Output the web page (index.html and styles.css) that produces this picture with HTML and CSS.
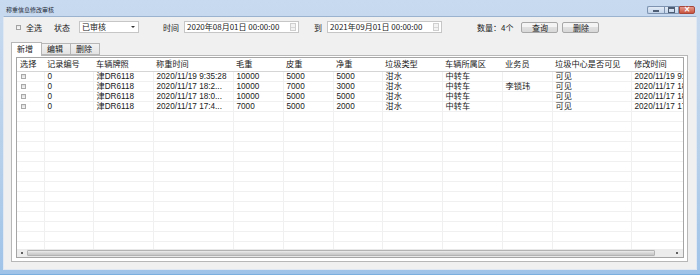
FILE: index.html
```html
<!DOCTYPE html>
<html lang="zh-CN">
<head>
    <meta charset="UTF-8">
    <title>称重信息修改审核</title>
    <link rel="stylesheet" href="styles.css">
</head>
<body>
    <div class="window">
        <!-- Title bar -->
        <div class="titlebar">
            <span class="title">称重信息修改审核</span>
            <div class="caption-btns">
                <span class="cap-btn cap-min"><i></i></span>
                <span class="cap-btn cap-max"><i></i></span>
                <span class="cap-btn cap-close">&#215;</span>
            </div>
        </div>

        <div class="client">
            <!-- Search bar -->
            <div class="toolbar">
                <span class="check"></span>
                <span class="lbl lbl-all">全选</span>
                <span class="lbl lbl-state">状态</span>
                <span class="combo">已审核<i class="arrow"></i></span>
                <span class="lbl lbl-time">时间</span>
                <span class="datebox">2020年08月01日 00:00:00<span class="spin"><i class="up"></i><i class="down"></i></span></span>
                <span class="lbl lbl-to">到</span>
                <span class="datebox">2021年09月01日 00:00:00<span class="spin"><i class="up"></i><i class="down"></i></span></span>
                <span class="lbl lbl-count">数量：4个</span>
                <span class="btn">查询</span>
                <span class="btn">删除</span>
            </div>

            <!-- Tabs -->
            <div class="tabs">
                <span class="tab active">新增</span>
                <span class="tab">编辑</span>
                <span class="tab">删除</span>
            </div>

            <div class="panel">
                <div class="grid">
                    <div class="grid-view">
                        <table class="list">
                            <colgroup>
                                <col style="width:27px"><col style="width:49px"><col style="width:60px">
                                <col style="width:80px"><col style="width:50px"><col style="width:50px">
                                <col style="width:49px"><col style="width:60px"><col style="width:60px">
                                <col style="width:50px"><col style="width:79px"><col style="width:80px">
                            </colgroup>
                            <thead>
                                <tr>
                                    <th>选择</th><th>记录编号</th><th>车辆牌照</th><th>称重时间</th>
                                    <th>毛重</th><th>皮重</th><th>净重</th><th>垃圾类型</th>
                                    <th>车辆所属区</th><th>业务员</th><th>垃圾中心是否可见</th><th>修改时间</th>
                                </tr>
                            </thead>
                            <tbody id="rows"></tbody>
                        </table>
                    </div>
                    <div class="hscroll">
                        <span class="sb-arrow sb-left"><i></i></span>
                        <span class="sb-thumb"></span>
                        <span class="sb-arrow sb-right"><i></i></span>
                    </div>
                </div>
            </div>
        </div>
    </div>

    <script>
        // List rows
        var data = [
            ["0", "津DR6118", "2020/11/19 9:35:28", "10000", "5000", "5000", "泔水", "中转车", "", "可见", "2020/11/19 9:44:10"],
            ["0", "津DR6118", "2020/11/17 18:2...", "10000", "7000", "3000", "泔水", "中转车", "李锁玮", "可见", "2020/11/17 18:25:01"],
            ["0", "津DR6118", "2020/11/17 18:0...", "10000", "5000", "5000", "泔水", "中转车", "", "可见", "2020/11/17 18:05:12"],
            ["0", "津DR6118", "2020/11/17 17:4...", "7000", "5000", "2000", "泔水", "中转车", "", "可见", "2020/11/17 17:45:30"]
        ];

        var tbody = document.getElementById("rows");
        for (var i = 0; i < 22; i++) {
            var tr = document.createElement("tr");
            var first = document.createElement("td");
            if (i < data.length) {
                first.innerHTML = '<span class="row-check"></span>';
            }
            tr.appendChild(first);
            for (var j = 0; j < 11; j++) {
                var td = document.createElement("td");
                td.innerText = i < data.length ? data[i][j] : "";
                tr.appendChild(td);
            }
            tbody.appendChild(tr);
        }
    </script>
</body>
</html>
```

FILE: styles.css
```css
/* Window frame */
body {
    margin: 0;
    padding: 0;
    background: #fff;
    font-family: "Noto Sans CJK SC", "Noto Sans", sans-serif;
    color: #1a1a1a;
}

.window {
    width: 700px;
    height: 275px;
    box-sizing: border-box;
    padding: 0 3px 4px 3px;
    display: flex;
    flex-direction: column;
    background: linear-gradient(#c8daef, #b5cfea 60%, #9fc3e8);
    border-bottom: 1px solid #7aaede;
}

.titlebar {
    height: 16px;
    display: flex;
    align-items: center;
    justify-content: space-between;
    flex-shrink: 0;
}

.title {
    font-size: 6px;
    margin-left: 3px;
    margin-top: 2px;
    color: #1f2a38;
}

.caption-btns {
    display: flex;
    align-self: flex-start;
    margin-top: 6px;
    margin-right: 2px;
}

.cap-btn {
    height: 8px;
    box-sizing: border-box;
    border: 1px solid #7d93b0;
    border-radius: 2px;
    background: linear-gradient(#e2ebf6, #c3d4ea);
    display: flex;
    align-items: center;
    justify-content: center;
}

.cap-min {
    width: 17px;
    border-right: none;
    border-radius: 2px 0 0 2px;
}

.cap-min i {
    width: 6px;
    height: 2px;
    margin-top: 2px;
    background: #4d5e75;
}

.cap-max {
    width: 15px;
    border-radius: 0;
}

.cap-max i {
    width: 5px;
    height: 3px;
    border: 1px solid #4d5e75;
    border-top-width: 2px;
}

.cap-close {
    width: 16px;
    border-color: #a6463b;
    border-radius: 0 2px 2px 0;
    background: linear-gradient(#e59a8c, #c9553f);
    color: #fff;
    font-size: 8px;
    line-height: 1;
    font-family: "DejaVu Sans", sans-serif;
    font-weight: bold;
}

.client {
    flex: 1;
    background: #f0f0f0;
    border: 1px solid #dfe8f3;
    border-top: 1px solid #9bb3cf;
    display: flex;
    flex-direction: column;
    min-height: 0;
}

/* Search bar */
.toolbar {
    display: flex;
    align-items: center;
    height: 12px;
    margin-top: 4px;
    font-size: 8px;
    white-space: nowrap;
}

.check {
    width: 5px;
    height: 5px;
    border: 1px solid #a3a3a3;
    background: linear-gradient(#e8e8e8, #fafafa);
    margin-left: 12px;
    box-sizing: border-box;
}

.lbl-all { margin-left: 5px; }
.lbl-state { margin-left: 12px; }
.lbl-time { margin-left: 24px; }
.lbl-to { margin-left: 15px; }
.lbl-count { margin-left: 35px; }

.combo {
    position: relative;
    width: 60px;
    height: 12px;
    box-sizing: border-box;
    margin-left: 9px;
    padding-left: 2px;
    background: #fff;
    border: 1px solid #c6c6c6;
    line-height: 10px;
}

.combo .arrow {
    position: absolute;
    right: 3px;
    top: 4px;
    border-left: 2px solid transparent;
    border-right: 2px solid transparent;
    border-top: 2px solid #333;
}

.datebox {
    position: relative;
    width: 115px;
    height: 12px;
    box-sizing: border-box;
    margin-left: 5px;
    padding-left: 2px;
    background: #fff;
    border: 1px solid #c6c6c6;
    line-height: 10px;
}

.spin {
    position: absolute;
    right: 2px;
    top: 1px;
    width: 6px;
    height: 8px;
    display: flex;
    flex-direction: column;
    border: 1px solid #cfcfcf;
    box-sizing: border-box;
    background: #f3f3f3;
}

.spin i {
    flex: 1;
    position: relative;
}

.spin .up {
    border-bottom: 1px solid #d8d8d8;
}

.btn {
    width: 37px;
    height: 11px;
    box-sizing: border-box;
    border: 1px solid #a8a8a8;
    border-radius: 2px;
    background: linear-gradient(#f4f4f4 50%, #e0e0e0 50%, #d8d8d8);
    text-align: center;
    line-height: 9px;
    margin-left: 8px;
}

.btn + .btn {
    margin-left: 4px;
}

/* Tabs */
.tabs {
    display: flex;
    align-items: flex-end;
    height: 13px;
    margin-top: 9px;
    margin-left: 7px;
    font-size: 8px;
    position: relative;
    z-index: 1;
}

.tab {
    height: 12px;
    box-sizing: border-box;
    padding: 0 0 0 5px;
    width: 29px;
    border: 1px solid #b7b7b7;
    border-left: none;
    background: linear-gradient(#f2f2f2, #e3e3e3);
    line-height: 10px;
    margin-bottom: 0;
}

.tab.active {
    height: 14px;
    width: 31px;
    border-left: 1px solid #b7b7b7;
    border-bottom: none;
    background: #fff;
    margin-bottom: -1px;
    line-height: 11px;
}

.panel {
    flex: 1;
    margin: 0 8px 7px 7px;
    border: 1px solid #b7b7b7;
    background: #fff;
    padding: 1px 3px 3px 4px;
    display: flex;
    min-height: 0;
}

/* List view */
.grid {
    flex: 1;
    border: 1px solid #a5a5a5;
    display: flex;
    flex-direction: column;
    min-height: 0;
    min-width: 0;
    background: #fff;
}

.grid-view {
    flex: 1;
    overflow: hidden;
    min-height: 0;
}

.list {
    border-collapse: collapse;
    table-layout: fixed;
    width: 694px;
    font-family: "Liberation Sans", "Noto Sans CJK SC", sans-serif;
    font-size: 8.2px;
    white-space: nowrap;
}

.list th {
    height: 13px;
    padding: 0 0 0 3px;
    text-align: left;
    font-weight: normal;
    border-bottom: 1px solid #d5d5d5;
    overflow: hidden;
    line-height: 12px;
}

.list td {
    height: 9px;
    padding: 0 0 0 3px;
    border-right: 1px solid #f0f0f0;
    border-bottom: 1px solid #f0f0f0;
    overflow: hidden;
    line-height: 9px;
}

.row-check {
    display: block;
    width: 5px;
    height: 5px;
    margin-left: 1px;
    box-sizing: border-box;
    border: 1px solid #a9a9a9;
    background: linear-gradient(#dcdcdc, #f4f4f4);
}

.hscroll {
    height: 8px;
    display: flex;
    flex-shrink: 0;
    background: #e8e8e8;
}

.sb-arrow {
    width: 10px;
    display: flex;
    align-items: center;
    justify-content: center;
    background: #ececec;
}

.sb-right {
    width: 28px;
    justify-content: flex-end;
    padding-right: 5px;
    box-sizing: border-box;
}

.sb-arrow i {
    width: 2px;
    height: 2px;
    background: #606060;
}

.sb-thumb {
    flex: 1;
    margin: 1px 0;
    border: 1px solid #b3b3b3;
    border-radius: 1px;
    background: linear-gradient(#ececec, #d6d6d6 50%, #c6c6c6);
}
```
